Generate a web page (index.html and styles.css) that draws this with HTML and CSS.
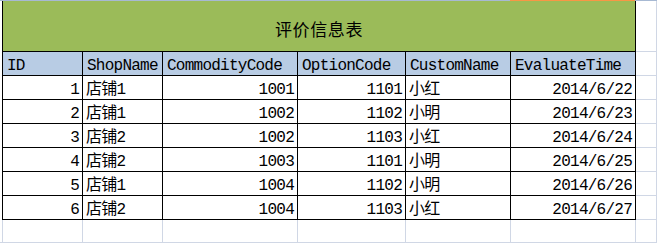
FILE: index.html
```html
<!DOCTYPE html>
<html lang="zh-CN">
<head>
<meta charset="utf-8">
<title>评价信息表</title>
<link rel="stylesheet" href="styles.css">
</head>
<body>
<div class="strip"><span class="strip-blue"></span><span class="strip-orange"></span><span class="strip-rest"></span></div>
<div class="sheet">
  <div class="gutter"></div>
  <div class="title">评价信息表</div>
  <div class="out"></div>

  <div class="gutter"></div>
  <div class="cell head first">ID</div>
  <div class="cell head">ShopName</div>
  <div class="cell head">CommodityCode</div>
  <div class="cell head">OptionCode</div>
  <div class="cell head">CustomName</div>
  <div class="cell head">EvaluateTime</div>
  <div class="out"></div>

  <div class="gutter"></div>
  <div class="cell num first">1</div><div class="cell">店铺1</div><div class="cell num">1001</div><div class="cell num">1101</div><div class="cell">小红</div><div class="cell num">2014/6/22</div>
  <div class="out"></div>

  <div class="gutter"></div>
  <div class="cell num first">2</div><div class="cell">店铺1</div><div class="cell num">1002</div><div class="cell num">1102</div><div class="cell">小明</div><div class="cell num">2014/6/23</div>
  <div class="out"></div>

  <div class="gutter"></div>
  <div class="cell num first">3</div><div class="cell">店铺2</div><div class="cell num">1002</div><div class="cell num">1103</div><div class="cell">小红</div><div class="cell num">2014/6/24</div>
  <div class="out"></div>

  <div class="gutter"></div>
  <div class="cell num first">4</div><div class="cell">店铺2</div><div class="cell num">1003</div><div class="cell num">1101</div><div class="cell">小明</div><div class="cell num">2014/6/25</div>
  <div class="out"></div>

  <div class="gutter"></div>
  <div class="cell num first">5</div><div class="cell">店铺1</div><div class="cell num">1004</div><div class="cell num">1102</div><div class="cell">小明</div><div class="cell num">2014/6/26</div>
  <div class="out"></div>

  <div class="gutter"></div>
  <div class="cell num first">6</div><div class="cell">店铺2</div><div class="cell num">1004</div><div class="cell num">1103</div><div class="cell">小红</div><div class="cell num">2014/6/27</div>
  <div class="out"></div>

  <div class="gutter gline"></div>
  <div class="out first-empty"></div><div class="out"></div><div class="out"></div><div class="out"></div><div class="out"></div><div class="out"></div><div class="out"></div>
</div>
</body>
</html>
```
FILE: styles.css
```css
html, body {
  margin: 0;
  padding: 0;
  background: #ffffff;
}

body {
  width: 657px;
  height: 246px;
  overflow: hidden;
}

.strip {
  display: flex;
  height: 1px;
}
.strip-blue { width: 510px; background: #a7b9d3; }
.strip-orange { width: 125px; background: #f79646; }
.strip-rest { flex: 1; background: #a7b9d3; }

.sheet {
  display: grid;
  grid-template-columns: 2px 81px 80px 135px 108px 105px 125px 1fr;
  grid-template-rows: 51px repeat(7, 24px) 23px;
  font-family: "Liberation Mono", "Cousine", "Courier New", "Noto Sans CJK SC", monospace;
  font-size: 16px;
  letter-spacing: -0.75px;
  color: #000;
}

.sheet > div {
  box-sizing: border-box;
  min-width: 0;
  overflow: hidden;
  white-space: nowrap;
}

.gutter.gline { border-bottom: 1px solid #d0d7e5; }

.title {
  grid-column: 2 / 8;
  background: #9bbb59;
  border-left: 1px solid #000;
  border-right: 1px solid #000;
  border-bottom: 1px solid #000;
  font-family: "Noto Sans CJK SC", sans-serif;
  font-size: 17px;
  letter-spacing: 0.6px;
  display: flex;
  align-items: center;
  justify-content: center;
  padding-top: 4px;
}

.out {
  border-right: 1px solid #d0d7e5;
  border-bottom: 1px solid #d0d7e5;
}
.out.first-empty { border-left: 1px solid #d0d7e5; }

.cell {
  border-right: 1px solid #000;
  border-bottom: 1px solid #000;
  padding: 4px 3px 0 3px;
  line-height: 20px;
  text-align: left;
  font-weight: 400;
}
.cell.first { border-left: 1px solid #000; }
.cell.head { background: #b8cce4; padding-left: 4px; }
.cell.num { text-align: right; padding-right: 3px; }
```
